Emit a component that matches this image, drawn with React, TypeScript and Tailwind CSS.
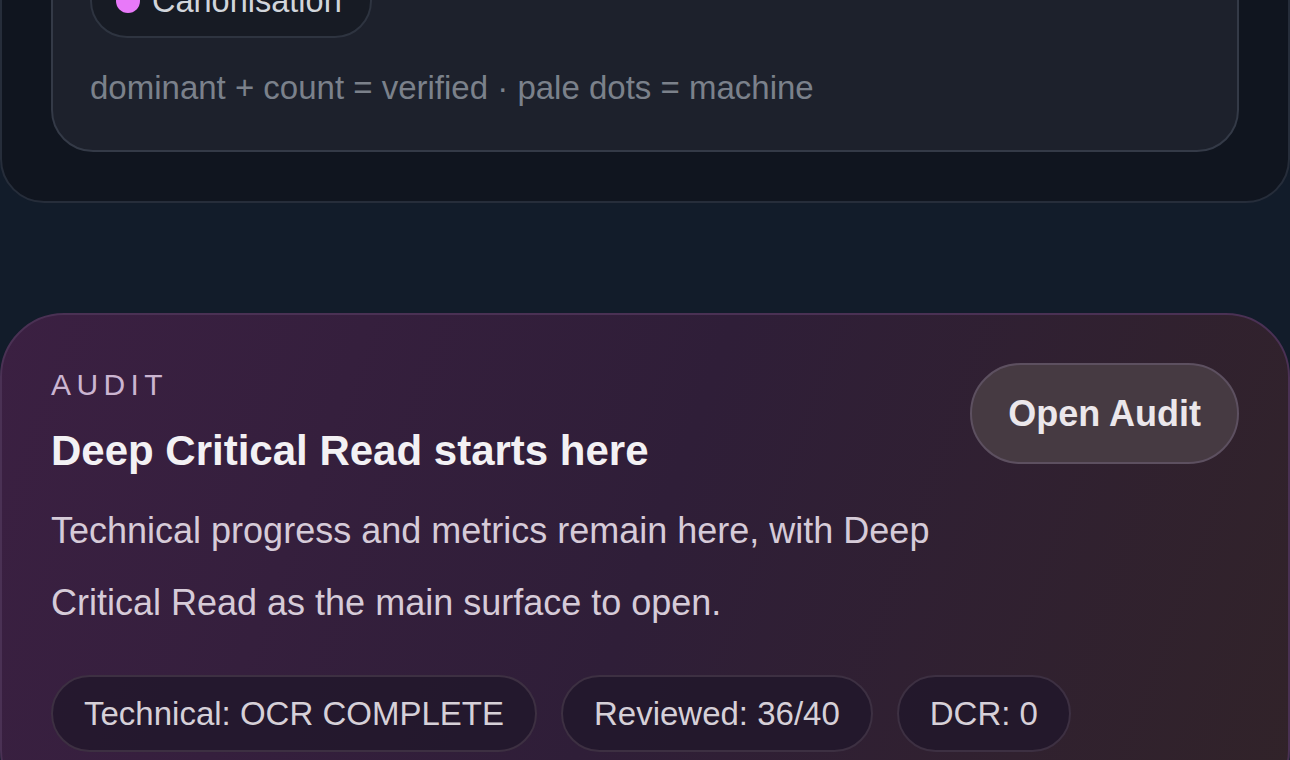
export default function App() {
  const chips = ["Technical: OCR COMPLETE", "Reviewed: 36/40", "DCR: 0"];

  return (
    <div
      className="min-h-[760px] overflow-hidden bg-[#121c2a] text-[#e5e7eb]"
      style={{ fontFamily: '"Liberation Sans", Arial, sans-serif' }}
    >
      {/* legend panel (scrolled, top cut off) */}
      <section className="mt-[-125px] rounded-[44px] border-2 border-[#262d3a] bg-[#10151f] p-[49px]">
        <div className="rounded-[42px] border-2 border-[#343a47] bg-[#1d212c] px-[37px] pb-[44px] pt-[36px]">
          <div className="flex">
            <span className="flex h-[74px] items-center gap-[12px] rounded-full border-2 border-[#2e3440] bg-[#171b24] pl-[24px] pr-[28px] text-[32.5px] text-[#d1d5db]">
              <span className="h-[24px] w-[24px] rounded-full bg-[#e879f9]" />
              Canonisation
            </span>
          </div>
          <p className="mt-[32px] text-[33px] leading-[36px] text-[#7b818b]">
            dominant + count = verified · pale dots = machine
          </p>
        </div>
      </section>

      {/* audit entry */}
      <section className="mt-[110px] rounded-[64px] border-2 border-[#4a3154] bg-[linear-gradient(110deg,#3b2042_0%,#2f1e38_50%,#312329_100%)] px-[49px] pb-[60px] pt-[52px]">
        <div className="flex items-start gap-[30px]">
          <div className="flex-1">
            <div className="text-[30px] uppercase leading-[36px] tracking-[0.18em] text-[#cbb5d1]">Audit</div>
            <h2 className="mt-[25px] text-[42px] font-bold leading-[46px] text-[#f3f1f4]">
              Deep Critical Read starts here
            </h2>
            <p className="mt-[21px] text-[36px] leading-[72px] text-[#d6cbd8]">
              Technical progress and metrics remain here, with Deep Critical Read as the main surface to open.
            </p>
          </div>
          <button className="mt-[-4px] h-[101px] shrink-0 rounded-full border-2 border-[#5d5060] bg-[#463a42] px-[36px] text-[36px] font-bold text-[#ebe7eb]">
            Open Audit
          </button>
        </div>
        <div className="mt-[36px] flex gap-[24px]">
          {chips.map((c) => (
            <span
              key={c}
              className="flex h-[77px] items-center rounded-full border-2 border-[#3d3042] bg-[#21172a]/80 px-[31px] text-[33px] text-[#d6d0d8]"
            >
              {c}
            </span>
          ))}
        </div>
      </section>
    </div>
  );
}
